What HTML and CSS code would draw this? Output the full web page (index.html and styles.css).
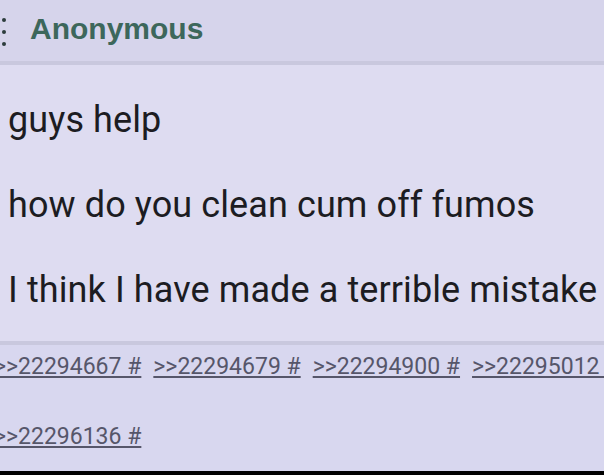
FILE: index.html
```html
<!DOCTYPE html>
<html lang="en">
<head>
    <meta charset="UTF-8">
    <title>Thread</title>
    <link rel="stylesheet" href="styles.css">
</head>
<body>
    <div class="post">
        <div class="post-header">
            <span class="menu-dots"><i></i><i></i><i></i></span>
            <span class="name">Anonymous</span>
        </div>
        <div class="post-body">
            <p>guys help</p>
            <p>how do you clean cum off fumos</p>
            <p>I think I have made a terrible mistake</p>
        </div>
        <div class="replies">
            <a href="#">&gt;&gt;22294667 #</a>
            <a href="#">&gt;&gt;22294679 #</a>
            <a href="#">&gt;&gt;22294900 #</a>
            <a href="#">&gt;&gt;22295012 #</a>
            <a href="#">&gt;&gt;22296136 #</a>
        </div>
    </div>
    <div class="bottom-bar"></div>
</body>
</html>
```

FILE: styles.css
```css
body {
    margin: 0;
    background-color: #dcdbf0;
    font-family: Roboto, "Liberation Sans", sans-serif;
    overflow: hidden;
}
.post-header {
    height: 61px;
    background-color: #d6d4eb;
    border-bottom: 4px solid #c9c8de;
    display: flex;
    align-items: center;
    gap: 24px;
    padding-left: 2px;
}
.menu-dots {
    display: flex;
    flex-direction: column;
    gap: 8px;
    margin-top: 2px;
}
.menu-dots i {
    width: 4px;
    height: 4px;
    background-color: #2c3c3c;
    border-radius: 50%;
}
.name {
    font-family: "Liberation Sans", Arial, sans-serif;
    font-weight: bold;
    font-size: 30px;
    color: #3d675b;
    margin-bottom: 4px;
}
.post-body {
    background-color: #dedcf1;
    padding: 34px 0 30px 8px;
    border-bottom: 4px solid #c9c8de;
}
.post-body p {
    margin: 0 0 43px;
    font-size: 36px;
    letter-spacing: 0.1px;
    line-height: 42px;
    color: #1c1c22;
    white-space: nowrap;
}
.post-body p:last-child {
    margin-bottom: 0;
}
.replies {
    background-color: #d8d7ef;
    display: flex;
    flex-wrap: wrap;
    width: 640px;
    column-gap: 12px;
    row-gap: 38px;
    margin-left: -6px;
    padding: 6px 0 18px;
}
.replies a {
    font-size: 23px;
    line-height: 32px;
    color: #56566a;
    text-decoration: underline;
    white-space: nowrap;
}
.bottom-bar {
    height: 20px;
    background-color: #000;
}
```
